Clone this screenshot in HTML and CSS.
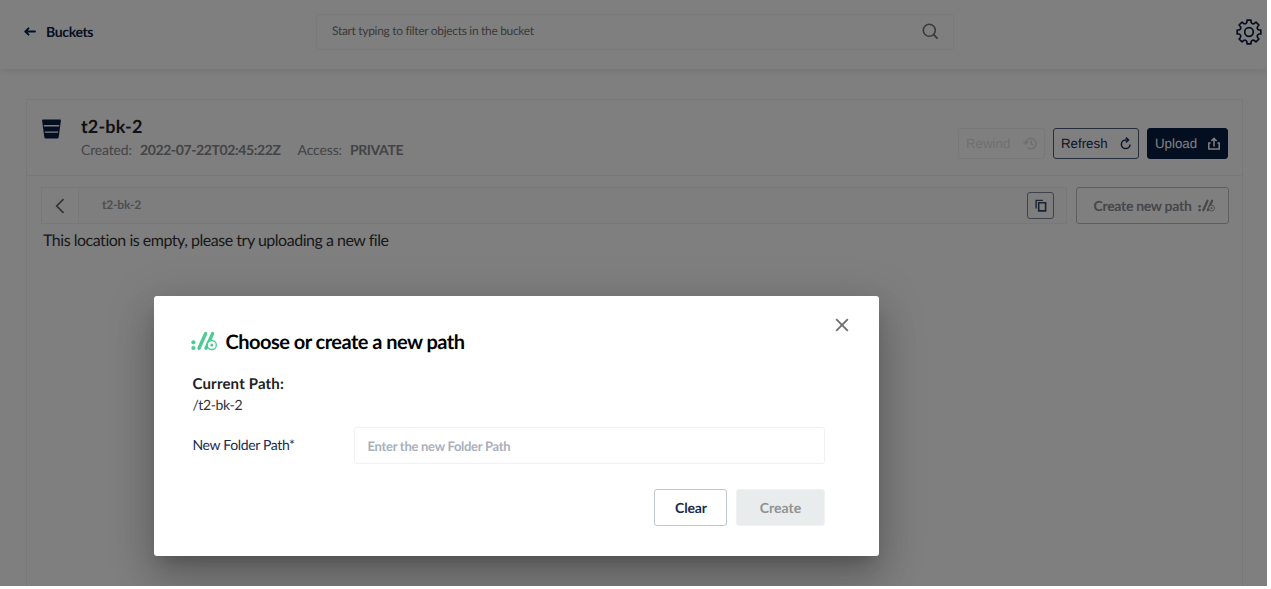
FILE: index.html
```html
<!DOCTYPE html>
<html lang="en">
<head>
<meta charset="utf-8">
<title>t2-bk-2</title>
<link rel="stylesheet" href="styles.css">
</head>
<body>
<svg width="0" height="0" class="defs">
  <symbol id="path-icon" viewBox="0 0 26 20">
    <circle cx="2.4" cy="11.3" r="2.1"/><circle cx="2.4" cy="17" r="2.1"/>
    <path d="M8 17.2 14.6 2.6M15 17.2 21.6 2.6" fill="none" stroke="currentColor" stroke-width="3.4" stroke-linecap="round"/>
    <circle class="ring" cx="20.8" cy="14" r="4.5" stroke="currentColor" stroke-width="1.3"/>
    <circle cx="20.8" cy="14" r="1.5"/>
  </symbol>
</svg>
<div class="app">
  <header class="topbar">
    <a class="back">
      <svg width="12" height="9" viewBox="0 0 12 9"><path d="M11 4.5H2M4.5 1.3 1.3 4.5l3.2 3.2" fill="none" stroke="currentColor" stroke-width="1.9" stroke-linecap="round" stroke-linejoin="round"/></svg>
      <span>Buckets</span>
    </a>
    <div class="search">
      <span>Start typing to filter objects in the bucket</span>
      <svg width="17" height="17" viewBox="0 0 17 17"><circle cx="7.3" cy="7.3" r="6" fill="none" stroke="currentColor" stroke-width="1.6"/><path d="m11.6 11.6 4 4" stroke="currentColor" stroke-width="1.9"/></svg>
    </div>
    <svg class="gear" width="26" height="26" viewBox="0 0 26 26" fill="none" stroke="currentColor" stroke-width="1.7" stroke-linejoin="round"><path d="M11 1.200h4V3q1.200 2.800 3.700 1.200l1.300-1.100 2.900 2.900-1.100 1.300Q20.200 9.800 23 11h1.800v4H23q-2.800 1.200-1.200 3.700l1.100 1.300-2.900 2.900-1.300-1.100Q16.200 20.200 15 23v1.800h-4V23q-1.200-2.800-3.700-1.200L6 22.900 3.100 20l1.100-1.300Q5.800 16.200 3 15H1.200v-4H3q2.800-1.200 1.200-3.700L3.100 6 6 3.100l1.300 1.100Q9.800 5.800 11 3z"/><circle cx="13" cy="13" r="4.300"/></svg>
  </header>
  <main class="panel">
    <div class="panel-head">
      <svg class="bucket" width="19" height="20" viewBox="0 0 19 20"><path fill="currentColor" d="M1 .5h17q1 0 .9 1L16.700 18q-.2 1.500-1.500 1.500H3.800Q2.500 19.500 2.300 18L.1 1.500Q0 .5 1 .5z"/><path class="stripe" d="M1.800 6.700h15.400M2.800 13.100h13.400"/></svg>
      <div class="info">
        <h1>t2-bk-2</h1>
        <p><span class="created">Created:</span><b class="date">2022-07-22T02:45:22Z</b><span class="access">Access:</span><b>PRIVATE</b></p>
      </div>
      <div class="actions">
        <button class="btn rewind"><span>Rewind</span><svg width="14" height="13" viewBox="0 0 14 13" fill="none" stroke="currentColor" stroke-width="1.5"><path d="M2.700 6.500a5.200 5.200 0 1 1 1.700 3.900M.4 4.500l2.300 2.400L5 4.500M8 3.500v3.300l2.200 1.300"/></svg></button>
        <button class="btn refresh"><span>Refresh</span><svg width="11" height="13" viewBox="0 0 11 13" fill="none" stroke="currentColor" stroke-width="1.500"><path d="M6.700 3H5.500a4.300 4.300 0 1 0 4.500 4.400"/><path d="m5.900.6 2.600 2.500-2.600 2.300"/></svg></button>
        <button class="btn upload"><span>Upload</span><svg width="12" height="13" viewBox="0 0 12 13" fill="none" stroke="currentColor" stroke-width="1.500"><path d="M2.600 6H.8v6.100h10.400V6H9.400M6 9.500V1.700M3.400 4 6 1.400 8.600 4"/></svg></button>
      </div>
    </div>
    <div class="path-row">
      <div class="crumbs">
        <span class="prev"><svg width="10" height="16" viewBox="0 0 10 16"><path d="M8.500 1.200 1.700 8l6.800 6.800" fill="none" stroke="currentColor" stroke-width="1.700"/></svg></span>
        <span class="crumb">t2-bk-2</span>
        <span class="copy"><svg width="12" height="13" viewBox="0 0 12 13" fill="none" stroke="currentColor" stroke-width="1.400"><path d="M1.100 9.500V1.400h6.700"/><path d="M3.700 3.800h6.900v8.100H3.700z" stroke-width="1.600"/></svg></span>
      </div>
      <button class="new-path"><span>Create new path</span><svg width="17" height="13"><use href="#path-icon"/></svg></button>
    </div>
    <p class="empty">This location is empty, please try uploading a new file</p>
  </main>
  <div class="overlay">
    <section class="modal">
      <svg class="close" width="14" height="14" viewBox="0 0 14 14"><path d="m1.200 1.200 11.600 11.600M12.800 1.200 1.200 12.800" stroke="currentColor" stroke-width="1.900"/></svg>
      <h2><svg width="26" height="20"><use href="#path-icon"/></svg><span>Choose or create a new path</span></h2>
      <div class="current">Current Path:</div>
      <div class="value">/t2-bk-2</div>
      <div class="field"><label>New Folder Path*</label><div class="input"><span>Enter the new Folder Path</span></div></div>
      <div class="footer"><button class="clear">Clear</button><button class="create">Create</button></div>
    </section>
  </div>
</div>
</body>
</html>
```
FILE: styles.css
```css
* { box-sizing: border-box; margin: 0; padding: 0; }
body { width: 1271px; height: 589px; overflow: hidden; background: #fff; font-family: Lato, sans-serif; color: #000; text-rendering: geometricPrecision; }
.defs { position: absolute; }
svg { display: block; flex: none; }
button { background: none; border: 0; font: inherit; text-rendering: inherit; }
span, label { white-space: nowrap; }

.app { position: relative; width: 1267px; height: 586px; overflow: hidden; background: #fff; }
.topbar { display: flex; align-items: center; height: 69px; padding: 0 5px 6px 24px; box-shadow: 0 2px 8px rgba(0, 0, 0, .1); }
.back { display: flex; align-items: center; gap: 10px; width: 292px; color: #0b2346; font-weight: 700; font-size: 14px; letter-spacing: -.35px; }
.search { display: flex; align-items: center; justify-content: space-between; width: 638px; height: 36px; padding: 0 14px 0 15px; border: 1px solid #f3f3f3; border-radius: 3px; color: #757575; font-size: 12px; letter-spacing: -.32px; }
.search span { padding-bottom: 2px; }
.gear { margin-left: auto; color: #081c42; }

.panel { width: 1217px; height: 500px; margin: 30px 0 0 26px; border: 1px solid #f0f0f0; }
.panel-head { display: flex; height: 76px; padding: 0 14px 0 15px; border-bottom: 1px solid #f0f0f0; }
.bucket { margin-top: 19px; color: #081c42; }
.stripe { stroke: #fff; stroke-width: 1.4; }
.info { margin: 15px 0 0 20px; }
.info h1 { color: #222; font-size: 18px; line-height: 22px; letter-spacing: .15px; }
.info p { display: flex; margin-top: 4px; color: #87888d; font-size: 14px; line-height: 18px; letter-spacing: -.38px; }
.info .created, .info .access { letter-spacing: -.15px; }
.date { margin: 0 17px 0 8px; }
.access { margin-right: 8px; }
.actions { display: flex; gap: 8px; margin: 28px 0 0 auto; height: 31px; font-family: "Liberation Sans", Arial, sans-serif; font-size: 13.3px; }
.btn { display: flex; align-items: center; justify-content: space-between; height: 31px; padding: 0 7px 1px; border: 1px solid #4b5a79; border-radius: 3px; color: #17294d; }
.rewind { width: 87px; border-color: #f0f0f0; color: #dfdfdf; }
.refresh { width: 86px; }
.upload { width: 81px; border-color: #081c42; background: #081c42; color: #fff; }

.path-row { display: flex; gap: 9px; padding: 11px 13px 0 14px; }
.crumbs { display: flex; align-items: center; width: 1026px; height: 37px; border: 1px solid #f0f0f0; background: #fcfcfd; }
.prev { display: flex; align-items: center; justify-content: center; width: 37px; height: 35px; border-right: 1px solid #f0f0f0; background: #fff; color: #666; }
.crumb { margin-left: 23px; padding-bottom: 2px; color: #969fa8; font-size: 12px; font-weight: 700; letter-spacing: -.2px; }
.copy { display: flex; align-items: center; justify-content: center; width: 27px; height: 27px; margin: 0 12px 0 auto; border: 1px solid #7c879b; border-radius: 3px; color: #384765; }
.new-path { display: flex; align-items: center; justify-content: center; gap: 7px; width: 153px; height: 37px; padding-left: 4px; border: 1px solid #b9bcc2; border-radius: 3px; color: #8b8e95; font-size: 14px; font-weight: 700; letter-spacing: -.3px; }
.new-path span { padding-bottom: 1px; }
symbol circle { fill: currentColor; }
symbol .ring { fill: #fff; }
.empty { margin: 6px 0 0 16px; color: #333; font-size: 16px; line-height: 22px; letter-spacing: -.48px; }

.overlay { position: absolute; inset: 0; display: flex; align-items: flex-start; padding: 296px 0 0 153.500px; background: rgba(0, 0, 0, .5); }
.modal { position: relative; width: 725px; height: 260px; padding: 34px 54px 0 39px; border-radius: 3px; background: #fff; box-shadow: 0 11px 15px -7px rgba(0, 0, 0, .2), 0 24px 38px 3px rgba(0, 0, 0, .14), 0 9px 46px 8px rgba(0, 0, 0, .12); }
.close { position: absolute; top: 22px; right: 30px; color: #707070; }
.modal h2 { display: flex; align-items: center; gap: 8.500px; height: 24px; margin-left: -1.500px; font-size: 20px; line-height: 24px; letter-spacing: -.52px; }
.modal h2 svg { color: #4ccb92; margin-top: -2px; }
.current { margin-top: 20px; color: #222; font-size: 15px; font-weight: 700; line-height: 20px; letter-spacing: .17px; }
.value { color: #333; font-size: 14px; line-height: 22px; letter-spacing: -.35px; }
.field { display: flex; align-items: center; margin-top: 11px; }
.field label { width: 161px; padding-bottom: 2px; color: #1a2b50; font-size: 14px; letter-spacing: -.35px; }
.input { display: flex; flex: 1; align-items: center; height: 37px; padding-left: 13px; border: 1px solid #eff1f2; border-radius: 3px; color: #a9afbc; font-size: 13px; font-weight: 700; letter-spacing: -.28px; }
.footer { display: flex; justify-content: flex-end; gap: 9px; margin-top: 25px; font-size: 14px; font-weight: 700; }
.clear { width: 73px; height: 37px; padding-left: 2px; border: 1px solid #bfc6d0; border-radius: 3px; color: #1a2b50; letter-spacing: -.15px; }
.create { width: 89px; height: 37px; padding-left: 1px; border: 1px solid #f1f3f3; border-radius: 3px; background: #e8ecec; color: #8f9394; }
```
